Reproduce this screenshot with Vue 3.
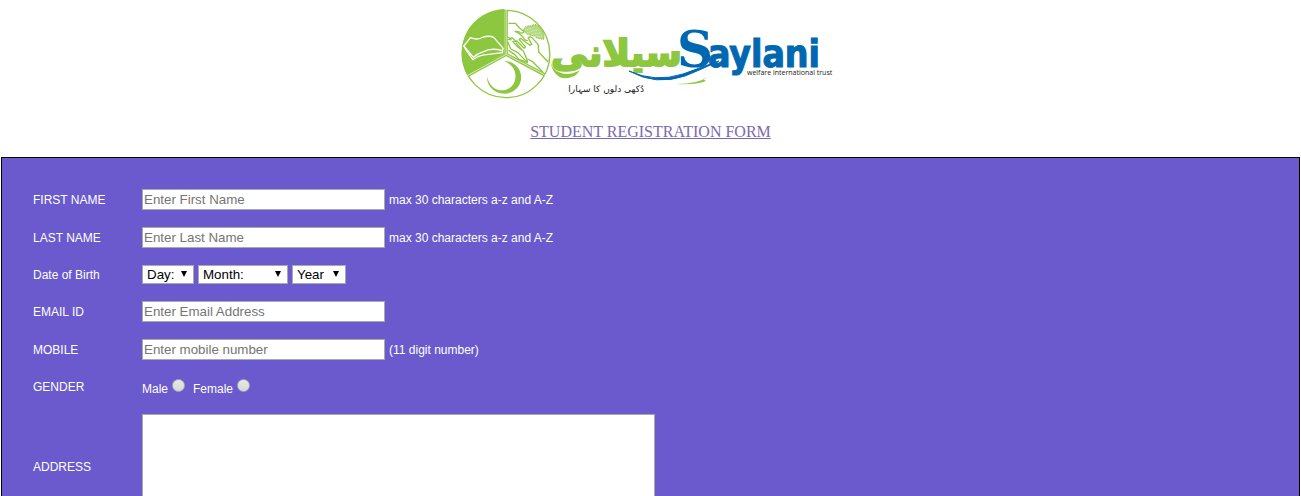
<script setup>
import { ref } from 'vue'

const student = ref({ first: '', last: '', email: '', mobile: '', gender: '', address: '' })
const birth = ref({ day: 'Day:', month: 'Month:', year: 'Year' })

const days = Array.from({ length: 31 }, (_, i) => i + 1)
const months = ['January', 'February', 'March', 'April', 'May', 'June', 'July', 'August', 'September', 'October', 'November', 'December']
const years = Array.from({ length: 30 }, (_, i) => 2012 - i)
</script>

<template>
  <header class="header">
    <svg class="logo" viewBox="0 0 380 104" role="img" aria-label="Saylani Welfare International Trust">
      <g transform="translate(-10.500 0) scale(.3333)" fill="none" stroke="#8dc63f" stroke-linejoin="round">
        <path d="M162 27V160L50 224A132 132 0 0 1 162 27Z" fill="#8dc63f" stroke="none" />
        <circle cx="167" cy="162" r="131" stroke-width="4" />
        <path d="M167 30V163L52 226M167 163 282 224" stroke-width="10" />
        <path d="M167 30V163L52 226M167 163 282 224" stroke="#fff" stroke-width="2" />
        <g stroke="#fff" stroke-width="4">
          <path d="M40 138 60 113Q82 122 98 111 115 106 130 112L158 145 156 152Q120 142 100 155 82 159 69 172Z" />
          <path d="M40 138 46 149 67 179Q85 166 108 164L156 158V152" />
        </g>
        <path d="M160 182C190 184 212 205 212 232 212 260 189 281 162 281 132 281 108 259 110 230 116 257 134 271 154 271 178 271 195 253 195 229 195 208 183 193 160 182Z" fill="#8dc63f" stroke="none" />
        <path d="M220 91Q224 76 242 78 258 68 270 84 281 95 280 117 258 116 249 106 232 108 220 91Z" fill="#8dc63f" fill-opacity=".65" stroke-width="4" stroke-dasharray="3 2" />
        <path d="M223 91 247 83M229 99 263 88M243 103 273 98M253 109 277 109" stroke="#fff" stroke-width="2" stroke-dasharray="3 3" />
        <g stroke-width="4">
          <path d="M174 70H195L207 84 221 95Q213 104 205 95L194 94Q213 103 222 117M173 119 185 113 195 122M174 111 183 121" />
          <path d="M172 126 181 147 202 158 231 188 229 177 219 154 202 141 187 125 199 123 221 145 225 140 206 119 210 115 238 136 244 133 233 114Q241 106 250 119L263 134 265 157 293 186" />
          <path d="M174 151 193 164 205 178 230 187M231 177 245 184 277 216M219 119 232 122M196 128 213 148" />
        </g>
      </g>
      <path d="M89 58q1 13 11 15 9 3 19-3l-4 5q-11 6-18 1-7-5-8-18Z" fill="#8dc63f" />
      <text class="arabic" x="221" y="66" text-anchor="end">سیلانی</text>
      <path d="M168 71q26 12 54 3 19-7 36-13-19 9-34 15-29 10-56-5Z" fill="#0067b1" stroke="#0067b1" />
      <path d="M216 84q20 0 31-7l-5 2 3 2q-10 4-29 3Z" fill="#8dc63f" />
      <text class="capital" x="216" y="67">S</text>
      <text class="latin" x="247" y="67">aylani</text>
      <text class="trust" x="286" y="75">welfare international trust</text>
      <text class="motto" x="183" y="92" text-anchor="end">دُکھی دلوں کا سہارا</text>
    </svg>
    <h1 class="title">STUDENT REGISTRATION FORM</h1>
  </header>

  <form class="form" @submit.prevent>
    <label for="first">FIRST NAME</label>
    <div class="field">
      <input id="first" v-model="student.first" class="text" type="text" maxlength="30" placeholder="Enter First Name">
      <span>max 30 characters a-z and A-Z</span>
    </div>

    <label for="last">LAST NAME</label>
    <div class="field">
      <input id="last" v-model="student.last" class="text" type="text" maxlength="30" placeholder="Enter Last Name">
      <span>max 30 characters a-z and A-Z</span>
    </div>

    <label for="day">Date of Birth</label>
    <div class="field">
      <span class="picker day">
        <select id="day" v-model="birth.day">
          <option>Day:</option>
          <option v-for="d in days" :key="d">{{ d }}</option>
        </select>
      </span>
      <span class="picker month">
        <select v-model="birth.month" aria-label="Month">
          <option>Month:</option>
          <option v-for="m in months" :key="m">{{ m }}</option>
        </select>
      </span>
      <span class="picker year">
        <select v-model="birth.year" aria-label="Year">
          <option>Year</option>
          <option v-for="y in years" :key="y">{{ y }}</option>
        </select>
      </span>
    </div>

    <label for="email">EMAIL ID</label>
    <div class="field">
      <input id="email" v-model="student.email" class="text" type="email" placeholder="Enter Email Address">
    </div>

    <label for="mobile">MOBILE</label>
    <div class="field">
      <input id="mobile" v-model="student.mobile" class="text" type="tel" maxlength="11" placeholder="Enter mobile number">
      <span>(11 digit number)</span>
    </div>

    <span id="gender">GENDER</span>
    <div class="field genders" role="radiogroup" aria-labelledby="gender">
      <label class="choice">Male <input v-model="student.gender" type="radio" name="gender" value="male"></label>
      <label class="choice">Female <input v-model="student.gender" type="radio" name="gender" value="female"></label>
    </div>

    <label for="address">ADDRESS</label>
    <div class="field">
      <textarea id="address" v-model="student.address"></textarea>
    </div>
  </form>
</template>

<style>
body {
  margin: 0;
  background: #fff;
}
</style>

<style scoped>
.header {
  display: flex;
  flex-direction: column;
  align-items: center;
}
.logo {
  display: block;
  width: 380px;
  height: 104px;
}
.arabic {
  font: bold 37px "DejaVu Sans", sans-serif;
  fill: #8dc63f;
  stroke: #8dc63f;
  stroke-width: 2px;
}
.capital {
  font: bold 50px "DejaVu Serif", serif;
  fill: #0067b1;
}
.latin {
  font: bold 37px "DejaVu Sans Condensed", "DejaVu Sans", sans-serif;
  fill: #0067b1;
  stroke: #0067b1;
  stroke-width: 1px;
}
.trust {
  font: 7px "Open Sans", sans-serif;
  fill: #222;
}
.motto {
  font: 9px "DejaVu Sans", sans-serif;
  fill: #222;
}
.title {
  margin: 18px 0 16px;
  font: 16px/19px "Liberation Serif", serif;
  color: #7b68ae;
  text-decoration: underline;
}
.form {
  display: grid;
  grid-template-columns: 92px 1fr;
  column-gap: 17px;
  row-gap: 17px;
  align-items: center;
  margin: 0 1px;
  padding: 31px;
  border: 1px solid #000;
  background: #6a5acd;
  color: #fff;
  font: 12px/14px "Liberation Sans", Arial, sans-serif;
}
.field {
  display: flex;
  align-items: center;
  gap: 4px;
}
.text,
select,
textarea {
  box-sizing: border-box;
  margin: 0;
  border: 1px solid #a9a9a9;
  border-radius: 0;
  background: #fff;
  color: #000;
  font-family: "Liberation Sans", Arial, sans-serif;
}
.text {
  width: 243px;
  height: 21px;
  padding: 1px;
}
.text::placeholder {
  color: #757575;
}
.picker {
  position: relative;
  height: 19px;
}
.picker::after {
  content: "";
  position: absolute;
  top: 6px;
  right: 7px;
  border: solid transparent;
  border-width: 6px 3px 0;
  border-top-color: #000;
  pointer-events: none;
}
.day {
  width: 52px;
}
.month {
  width: 90px;
}
.year {
  width: 54px;
}
select {
  display: block;
  width: 100%;
  height: 19px;
  padding: 0 4px;
  appearance: none;
}
.genders {
  height: 20px;
  gap: 8px;
}
.choice {
  display: flex;
  align-items: flex-end;
  gap: 4px;
}
.choice input {
  width: 13px;
  height: 13px;
  margin: 0 0 4px;
  border: 1px solid #aaa;
  border-radius: 50%;
  background: linear-gradient(#e8e8e8, #d8d8d8);
  appearance: none;
}
.choice input:checked {
  background: radial-gradient(#444 35%, #e0e0e0 40%);
}
textarea {
  display: block;
  width: 513px;
  height: 106px;
  padding: 2px;
  resize: none;
}
</style>
